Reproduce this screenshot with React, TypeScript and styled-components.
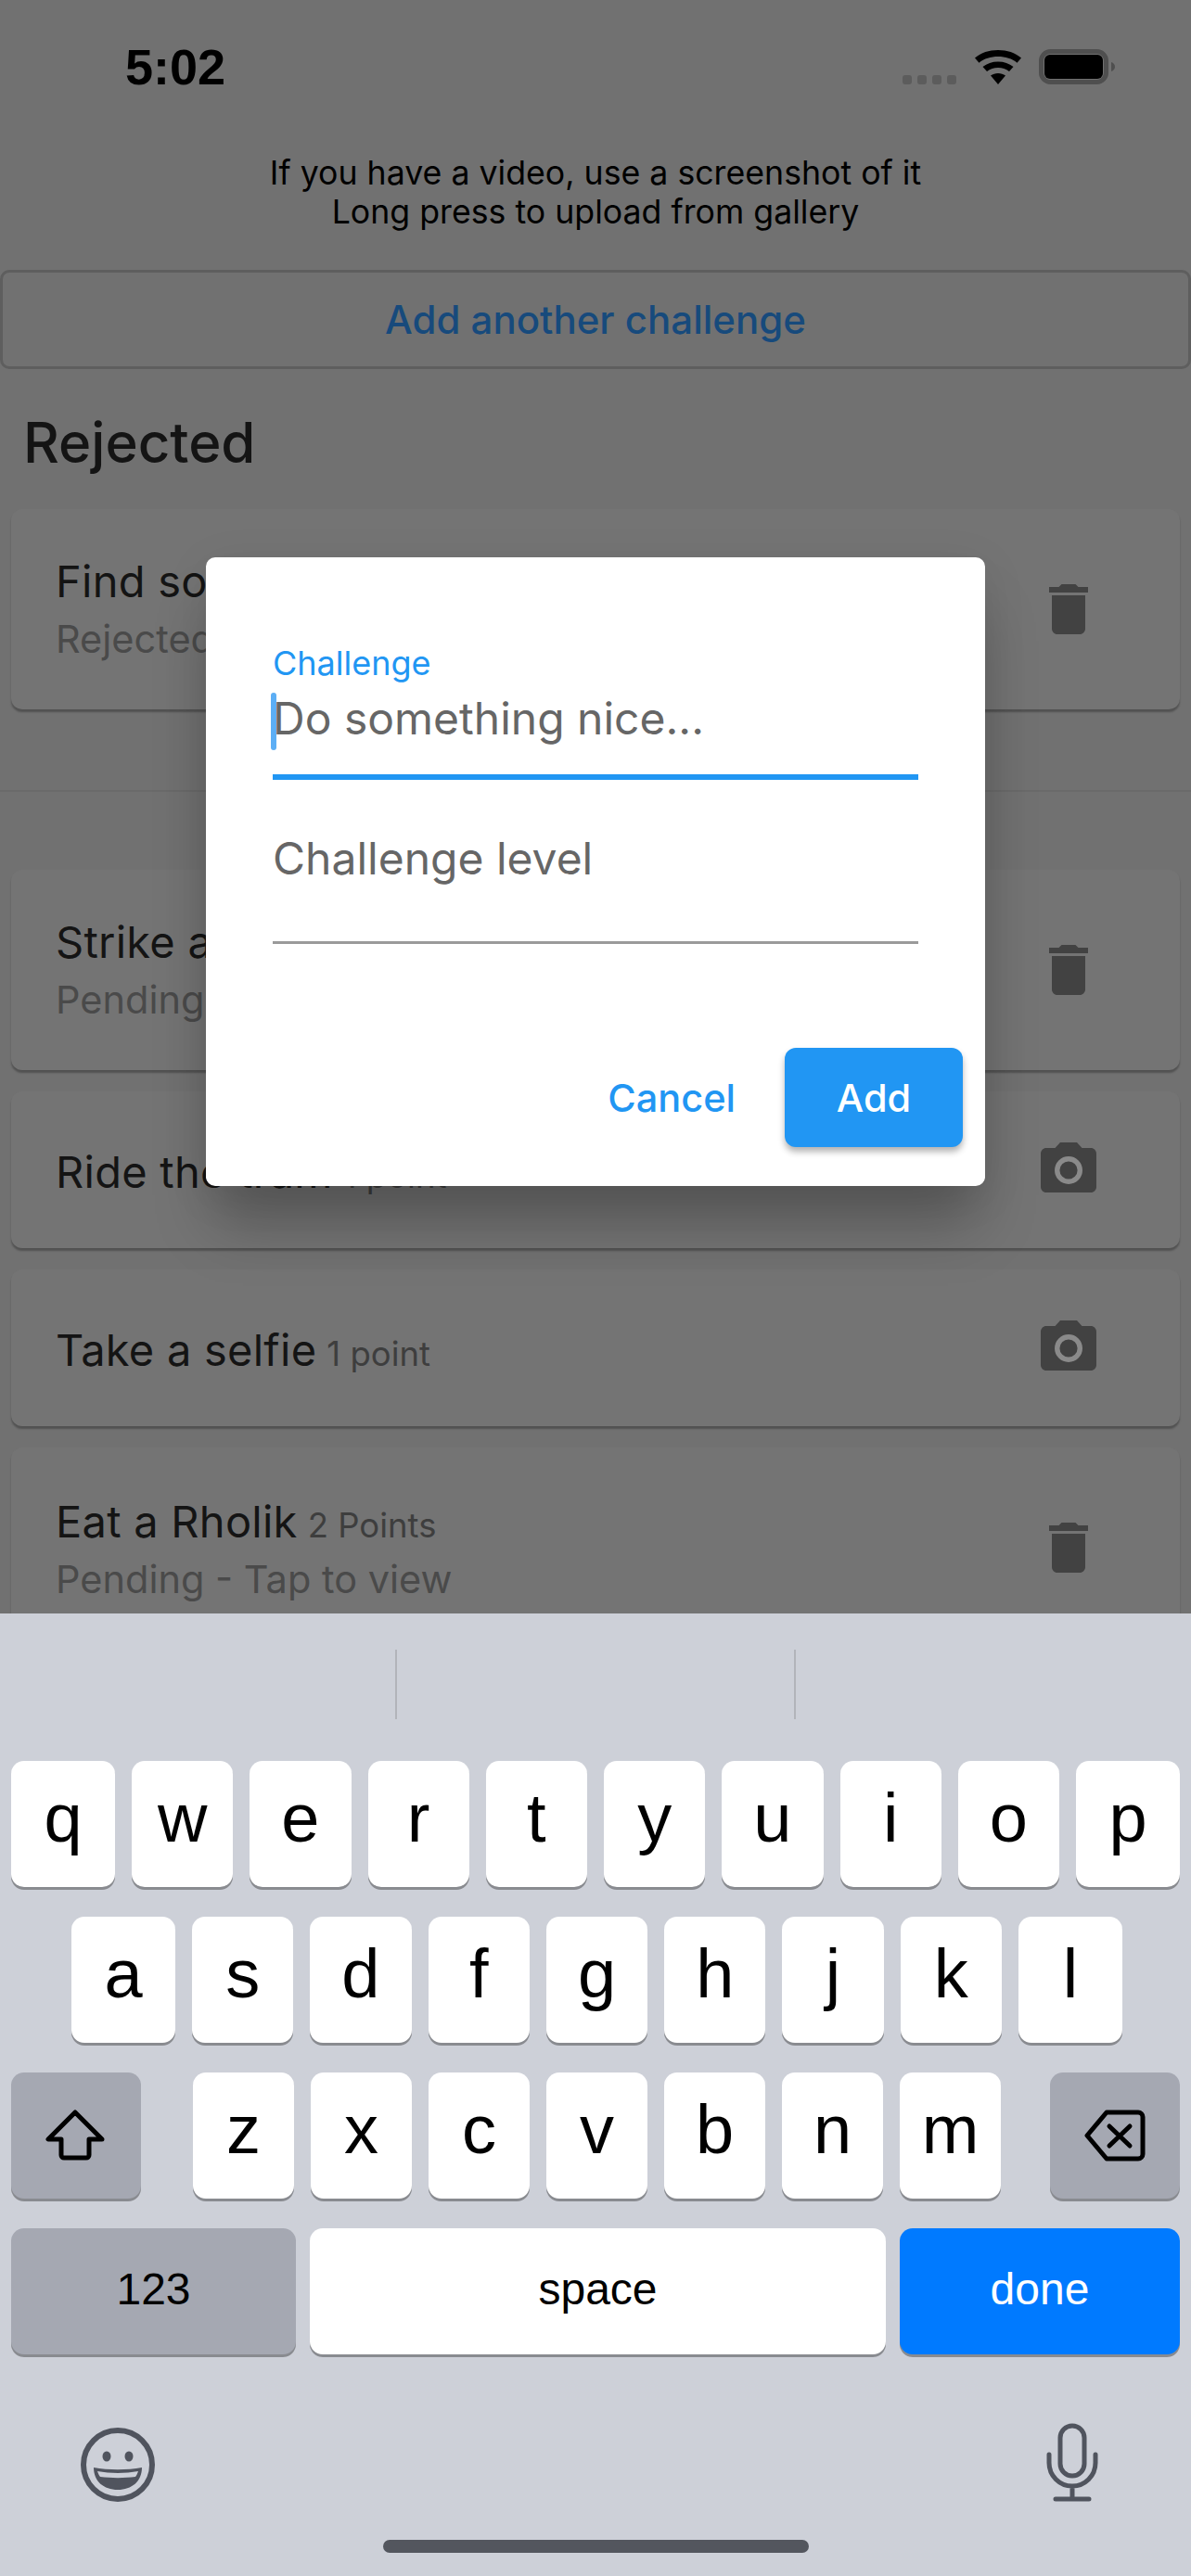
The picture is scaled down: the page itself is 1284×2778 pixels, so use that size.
import React from 'react';
import styled, { createGlobalStyle } from 'styled-components';

const GlobalStyle = createGlobalStyle`
  html, body {
    margin: 0;
    padding: 0;
    background: #cdd0d8;
  }
  * {
    box-sizing: border-box;
  }
`;

const sans = `Inter, "Liberation Sans", sans-serif`;
const keyFont = `"Liberation Sans", Arial, sans-serif`;

const Page = styled.div`
  position: relative;
  width: 1284px;
  height: 2778px;
  overflow: hidden;
  display: flex;
  flex-direction: column;
  font-family: ${sans};
`;

const Screen = styled.div`
  position: relative;
  height: 1740px;
  flex: none;
  overflow: hidden;
  background: #717171;
`;

const StatusBar = styled.div`
  height: 152px;
  padding: 42px 82px 0 135px;
  display: flex;
  justify-content: space-between;
  align-items: flex-start;
`;

const Clock = styled.span`
  font-family: ${keyFont};
  font-size: 54px;
  line-height: 60px;
  font-weight: 700;
  color: #000;
`;

const StatusSvg = styled.svg`
  margin-top: 11px;
`;

const Hint = styled.p`
  margin: 0;
  height: 139px;
  text-align: center;
  font-size: 35.7px;
  line-height: 42px;
  color: #000;
  padding-top: 13px;
`;

const AddAnother = styled.button`
  display: block;
  width: 100%;
  height: 107px;
  background: transparent;
  border: 3px solid #5e5e5e;
  border-radius: 10px;
  font-family: ${sans};
  font-size: 42px;
  font-weight: 500;
  color: #174a7c;
`;

const Heading = styled.h2`
  margin: 0;
  padding: 44px 0 37px 25px;
  font-size: 60px;
  line-height: 70px;
  font-weight: 500;
  color: #141414;
`;

const Card = styled.div<{ $tall?: boolean }>`
  margin: 0 12px 23px;
  height: ${({ $tall }) => ($tall ? 216 : 169)}px;
  padding: 0 84px 0 48px;
  display: flex;
  align-items: center;
  justify-content: space-between;
  background: #747474;
  border-radius: 12px;
  box-shadow: 0 3px 2px rgba(0, 0, 0, 0.28);
`;

const CardText = styled.div`
  display: flex;
  flex-direction: column;
  gap: 10px;
`;

// titles that carry a points label sit a little lower than the plain ones
const CardTitle = styled.div<{ $scored?: boolean }>`
  font-size: 47px;
  line-height: 54px;
  letter-spacing: 0.25px;
  color: #141414;
  white-space: nowrap;
  margin: ${({ $scored }) => ($scored ? '4px 0 -4px' : '0')};
`;

const Points = styled.span`
  margin-left: 11px;
  font-size: 36.5px;
  letter-spacing: 0;
  color: #3e3e3e;
`;

const CardSub = styled.div`
  font-size: 41.5px;
  line-height: 50px;
  color: #4a4a4a;
`;

const Divider = styled.div`
  height: 2px;
  margin: 87px 0 84px;
  background: #6a6a6a;
`;

const ActionIcon = styled.svg`
  width: 72px;
  height: 72px;
  flex: none;
  fill: #424242;
`;

const Dialog = styled.div`
  position: absolute;
  top: 601px;
  left: 222px;
  width: 840px;
  height: 678px;
  padding: 91px 72px 0;
  background: #fff;
  border-radius: 10px;
  box-shadow: 0 50px 60px -10px rgba(0, 0, 0, 0.25), 0 10px 50px rgba(0, 0, 0, 0.08);
`;

const FieldLabel = styled.div`
  font-size: 36px;
  line-height: 46px;
  color: #2196f3;
`;

const ActiveInput = styled.div`
  position: relative;
  height: 103px;
  padding-top: 9px;
  font-size: 48px;
  line-height: 56px;
  color: #666;
  border-bottom: 6px solid #2196f3;
`;

const Caret = styled.span`
  position: absolute;
  left: -2px;
  top: 9px;
  width: 6px;
  height: 62px;
  border-radius: 3px;
  background: #5caef5;
`;

const IdleInput = styled.div`
  height: 177px;
  padding-top: 57px;
  font-size: 48px;
  line-height: 56px;
  color: #666;
  border-bottom: 3px solid #9a9a9a;
`;

const DialogActions = styled.div`
  position: absolute;
  right: 24px;
  bottom: 42px;
  display: flex;
  align-items: center;
  gap: 53px;
`;

const TextButton = styled.span`
  font-size: 41.5px;
  font-weight: 500;
  color: #2196f3;
`;

const RaisedButton = styled.button`
  width: 192px;
  height: 107px;
  border: 0;
  border-radius: 12px;
  background: #2196f3;
  color: #fff;
  font-family: ${sans};
  font-size: 41.5px;
  font-weight: 500;
  box-shadow: 0 5px 7px rgba(0, 0, 0, 0.3);
`;

const Keyboard = styled.div`
  flex: 1;
  display: flex;
  flex-direction: column;
  background: #cdd0d8;
`;

const Suggestions = styled.div`
  height: 159px;
  padding-top: 39px;
  display: flex;
  justify-content: center;
  gap: 428px;
`;

const SuggestionLine = styled.span`
  width: 2px;
  height: 75px;
  background: #b2b4ba;
`;

const KeyRow = styled.div<{ $left?: number; $right?: number; $gap?: number }>`
  display: flex;
  gap: ${({ $gap }) => $gap ?? 18}px;
  height: 136px;
  margin-bottom: 32px;
  padding: 0 ${({ $right }) => $right ?? 12}px 0 ${({ $left }) => $left ?? 12}px;
`;

const Key = styled.div<{
  $tone?: 'light' | 'dark' | 'blue';
  $width?: number;
  $small?: boolean;
  $icon?: boolean;
}>`
  flex: ${({ $width }) => ($width ? `0 0 ${$width}px` : '1')};
  display: flex;
  align-items: center;
  justify-content: center;
  border-radius: 14px;
  font-family: ${keyFont};
  font-size: ${({ $small }) => ($small ? 48 : 74)}px;
  line-height: 1;
  padding-bottom: ${({ $small, $icon }) => ($icon ? 0 : $small ? 4 : 12)}px;
  color: ${({ $tone }) => ($tone === 'blue' ? '#fff' : '#000')};
  background: ${({ $tone }) =>
    $tone === 'dark' ? '#a5a8b2' : $tone === 'blue' ? '#007aff' : '#fff'};
  box-shadow: 0 3px 0 #898b90;
`;

const KeySpacer = styled.span<{ $width: number }>`
  flex: 0 0 ${({ $width }) => $width}px;
`;

const ShiftSvg = styled.svg`
  margin-right: 3px;
`;

const BottomIcons = styled.div`
  padding: 42px 100px 0 87px;
  display: flex;
  justify-content: space-between;
  align-items: flex-start;
`;

const EmojiSvg = styled.svg`
  margin-top: 5px;
`;

const HomeBar = styled.div`
  width: 459px;
  height: 14px;
  margin: 40px auto 0;
  border-radius: 7px;
  background: #53565e;
`;

const TrashIcon = () => (
  <ActionIcon viewBox="0 0 24 24">
    <path d="M6 19c0 1.1.9 2 2 2h8c1.1 0 2-.9 2-2V7H6v12zM19 4h-3.5l-1-1h-5l-1 1H5v2h14V4z" />
  </ActionIcon>
);

const CameraIcon = () => (
  <ActionIcon viewBox="0 0 24 24">
    <path d="M9 2 7.17 4H4c-1.1 0-2 .9-2 2v12c0 1.1.9 2 2 2h16c1.1 0 2-.9 2-2V6c0-1.1-.9-2-2-2h-3.17L15 2H9z" />
    <circle cx="12" cy="12" r="4.1" fill="none" stroke="#8a8a8a" strokeWidth="1.8" />
  </ActionIcon>
);

const StatusIcons = () => (
  <StatusSvg width="232" height="44" viewBox="0 0 232 44">
    <g fill="#5c5c5c">
      <rect x="3" y="28" width="10" height="10" rx="3" />
      <rect x="19" y="28" width="10" height="10" rx="3" />
      <rect x="35" y="28" width="10" height="10" rx="3" />
      <rect x="51" y="28" width="10" height="10" rx="3" />
    </g>
    <path
      d="M81 9.500C88 3.700 96 1 106 1s18 2.700 25 8.500l-4.500 5.200C121 10.200 114 8 106 8s-15 2.200-20.500 6.700zM89.500 19C94 15.500 99.500 13.500 106 13.500s12 2 16.500 5.500l-4.500 5C114.500 21.400 110.500 20 106 20s-8.500 1.400-12 4zM98 28.500c2.300-1.500 5-2.500 8-2.500s5.700 1 8 2.500L106 38z"
      fill="#000"
    />
    <rect x="152.500" y="2.500" width="70" height="33" rx="10" fill="none" stroke="#4f4f4f" strokeWidth="5" />
    <rect x="156" y="6" width="63" height="26" rx="6" fill="#000" />
    <path d="M228 14c2.500 .8 4 2.700 4 5s-1.500 4.200-4 5z" fill="#4f4f4f" />
  </StatusSvg>
);

const ShiftIcon = () => (
  <ShiftSvg width="66" height="56" viewBox="0 0 66 56" fill="none" stroke="#000" strokeWidth="5" strokeLinejoin="round">
    <path d="M33 3 4 32h14v17a3 3 0 0 0 3 3h24a3 3 0 0 0 3-3V32h14z" />
  </ShiftSvg>
);

const BackspaceIcon = () => (
  <svg width="66" height="56" viewBox="0 0 66 56" fill="none" stroke="#000" strokeWidth="5" strokeLinecap="round" strokeLinejoin="round">
    <path d="M24 3h34a5 5 0 0 1 5 5v40a5 5 0 0 1-5 5H24L3 28z" />
    <path d="M27 18 49 39M49 18 27 39" />
  </svg>
);

const EmojiIcon = () => (
  <EmojiSvg width="80" height="80" viewBox="0 0 80 80">
    <circle cx="40" cy="40" r="37" fill="none" stroke="#50545e" strokeWidth="6" />
    <ellipse cx="28" cy="31" rx="4.500" ry="5.500" fill="#50545e" />
    <ellipse cx="52" cy="31" rx="4.500" ry="5.500" fill="#50545e" />
    <path d="M14 43c16 3 36 3 52 0 0 15-11 24-26 24S14 58 14 43z" fill="#50545e" />
    <path d="M18 47c14 2.500 30 2.500 44 0-1 3-2 5-3 6-12 1.500-26 1.500-38 0-1-1-2-3-3-6z" fill="#cdd0d8" />
  </EmojiSvg>
);

const MicIcon = () => (
  <svg width="56" height="86" viewBox="0 0 56 86" fill="none" stroke="#50545e" strokeWidth="5" strokeLinecap="round">
    <rect x="15" y="3" width="26" height="54" rx="13" />
    <path d="M3 34v9a25 25 0 0 0 50 0v-9M28 68v14M10 82h36" />
  </svg>
);

const row1 = 'qwertyuiop'.split('');
const row2 = 'asdfghjkl'.split('');
const row3 = 'zxcvbnm'.split('');

// the outer keys of the two top rows are a little wider than the rest
const edgeWidth = (i: number, length: number) => (i === 0 || i === length - 1 ? 112 : undefined);

const App: React.FC = () => (
  <Page>
    <GlobalStyle />
    <Screen>
      <StatusBar>
        <Clock>5:02</Clock>
        <StatusIcons />
      </StatusBar>
      <Hint>
        If you have a video, use a screenshot of it
        <br />
        Long press to upload from gallery
      </Hint>
      <AddAnother>Add another challenge</AddAnother>
      <Heading>Rejected</Heading>
      <Card $tall>
        <CardText>
          <CardTitle>Find something</CardTitle>
          <CardSub>Rejected</CardSub>
        </CardText>
        <TrashIcon />
      </Card>
      <Divider />
      <Card $tall>
        <CardText>
          <CardTitle>Strike a pose</CardTitle>
          <CardSub>Pending</CardSub>
        </CardText>
        <TrashIcon />
      </Card>
      <Card>
        <CardTitle $scored>
          Ride the tram<Points>1 point</Points>
        </CardTitle>
        <CameraIcon />
      </Card>
      <Card>
        <CardTitle $scored>
          Take a selfie<Points>1 point</Points>
        </CardTitle>
        <CameraIcon />
      </Card>
      <Card $tall>
        <CardText>
          <CardTitle $scored>
            Eat a Rholik<Points>2 Points</Points>
          </CardTitle>
          <CardSub>Pending - Tap to view</CardSub>
        </CardText>
        <TrashIcon />
      </Card>
      <Dialog>
        <FieldLabel>Challenge</FieldLabel>
        <ActiveInput>
          <Caret />
          Do something nice...
        </ActiveInput>
        <IdleInput>Challenge level</IdleInput>
        <DialogActions>
          <TextButton>Cancel</TextButton>
          <RaisedButton>Add</RaisedButton>
        </DialogActions>
      </Dialog>
    </Screen>
    <Keyboard>
      <Suggestions>
        <SuggestionLine />
        <SuggestionLine />
      </Suggestions>
      <KeyRow>
        {row1.map((k, i) => (
          <Key key={k} $width={edgeWidth(i, row1.length)}>
            {k}
          </Key>
        ))}
      </KeyRow>
      <KeyRow $left={77} $right={74}>
        {row2.map((k, i) => (
          <Key key={k} $width={edgeWidth(i, row2.length)}>
            {k}
          </Key>
        ))}
      </KeyRow>
      <KeyRow>
        <Key $tone="dark" $width={140} $icon>
          <ShiftIcon />
        </Key>
        <KeySpacer $width={20} />
        {row3.map((k) => (
          <Key key={k}>{k}</Key>
        ))}
        <KeySpacer $width={17} />
        <Key $tone="dark" $width={140} $icon>
          <BackspaceIcon />
        </Key>
      </KeyRow>
      <KeyRow $gap={15}>
        <Key $tone="dark" $width={307} $small>
          123
        </Key>
        <Key $small>space</Key>
        <Key $tone="blue" $width={302} $small>
          done
        </Key>
      </KeyRow>
      <BottomIcons>
        <EmojiIcon />
        <MicIcon />
      </BottomIcons>
      <HomeBar />
    </Keyboard>
  </Page>
);

export default App;
